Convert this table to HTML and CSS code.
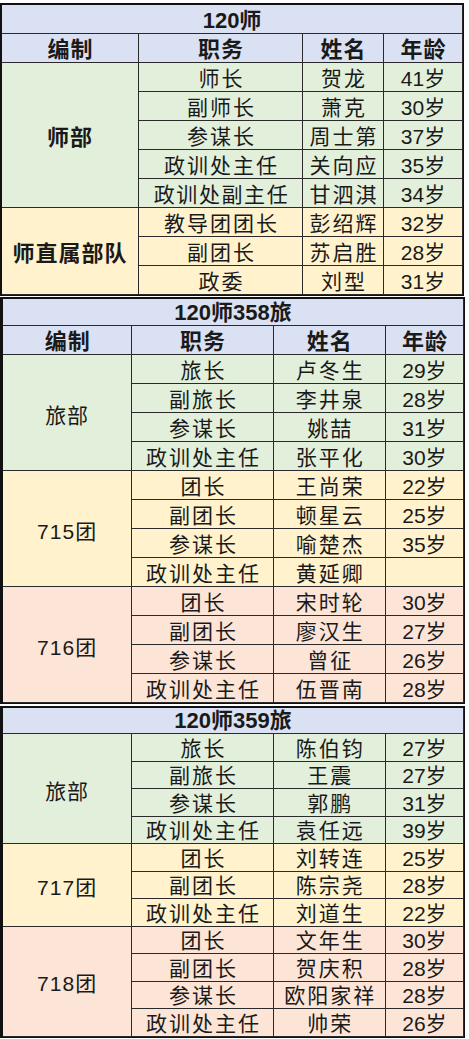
FILE: index.html
```html
<!DOCTYPE html>
<html lang="zh-CN">
<head>
<meta charset="utf-8">
<title>120师编制</title>
<link rel="stylesheet" href="styles.css">
</head>
<body>
<table class="sheet t1">
  <colgroup><col class="c1"><col class="c2"><col class="c3"><col class="c4"></colgroup>
  <tr class="title"><td colspan="4">120师</td></tr>
  <tr class="head"><td>编制</td><td>职务</td><td>姓名</td><td>年龄</td></tr>
  <tr class="green"><td class="grp bold" rowspan="5">师部</td><td class="cj">师长</td><td class="cj">贺龙</td><td>41岁</td></tr>
  <tr class="green"><td class="cj">副师长</td><td class="cj">萧克</td><td>30岁</td></tr>
  <tr class="green"><td class="cj">参谋长</td><td class="cj">周士第</td><td>37岁</td></tr>
  <tr class="green"><td class="cj">政训处主任</td><td class="cj">关向应</td><td>35岁</td></tr>
  <tr class="green"><td class="cj tight">政训处副主任</td><td class="cj">甘泗淇</td><td>34岁</td></tr>
  <tr class="yellow"><td class="grp bold" rowspan="3">师直属部队</td><td class="cj">教导团团长</td><td class="cj">彭绍辉</td><td>32岁</td></tr>
  <tr class="yellow"><td class="cj">副团长</td><td class="cj">苏启胜</td><td>28岁</td></tr>
  <tr class="yellow"><td class="cj">政委</td><td class="cj">刘型</td><td>31岁</td></tr>
</table>

<table class="sheet t2">
  <colgroup><col class="d1"><col class="d2"><col class="d3"><col class="d4"></colgroup>
  <tr class="title"><td colspan="4">120师358旅</td></tr>
  <tr class="head"><td>编制</td><td>职务</td><td>姓名</td><td>年龄</td></tr>
  <tr class="green"><td class="grp" rowspan="4">旅部</td><td class="cj">旅长</td><td class="cj">卢冬生</td><td>29岁</td></tr>
  <tr class="green"><td class="cj">副旅长</td><td class="cj">李井泉</td><td>28岁</td></tr>
  <tr class="green"><td class="cj">参谋长</td><td class="cj">姚喆</td><td>31岁</td></tr>
  <tr class="green"><td class="cj">政训处主任</td><td class="cj">张平化</td><td>30岁</td></tr>
  <tr class="yellow"><td class="grp" rowspan="4">715团</td><td class="cj">团长</td><td class="cj">王尚荣</td><td>22岁</td></tr>
  <tr class="yellow"><td class="cj">副团长</td><td class="cj">顿星云</td><td>25岁</td></tr>
  <tr class="yellow"><td class="cj">参谋长</td><td class="cj">喻楚杰</td><td>35岁</td></tr>
  <tr class="yellow"><td class="cj">政训处主任</td><td class="cj">黄延卿</td><td></td></tr>
  <tr class="pink"><td class="grp" rowspan="4">716团</td><td class="cj">团长</td><td class="cj">宋时轮</td><td>30岁</td></tr>
  <tr class="pink"><td class="cj">副团长</td><td class="cj">廖汉生</td><td>27岁</td></tr>
  <tr class="pink"><td class="cj">参谋长</td><td class="cj">曾征</td><td>26岁</td></tr>
  <tr class="pink"><td class="cj">政训处主任</td><td class="cj">伍晋南</td><td>28岁</td></tr>
</table>

<table class="sheet t3">
  <colgroup><col class="d1"><col class="d2"><col class="d3"><col class="d4"></colgroup>
  <tr class="title"><td colspan="4">120师359旅</td></tr>
  <tr class="green"><td class="grp" rowspan="4">旅部</td><td class="cj">旅长</td><td class="cj">陈伯钧</td><td>27岁</td></tr>
  <tr class="green"><td class="cj">副旅长</td><td class="cj">王震</td><td>27岁</td></tr>
  <tr class="green"><td class="cj">参谋长</td><td class="cj">郭鹏</td><td>31岁</td></tr>
  <tr class="green"><td class="cj">政训处主任</td><td class="cj">袁任远</td><td>39岁</td></tr>
  <tr class="yellow"><td class="grp" rowspan="3">717团</td><td class="cj">团长</td><td class="cj">刘转连</td><td>25岁</td></tr>
  <tr class="yellow"><td class="cj">副团长</td><td class="cj">陈宗尧</td><td>28岁</td></tr>
  <tr class="yellow"><td class="cj">政训处主任</td><td class="cj">刘道生</td><td>22岁</td></tr>
  <tr class="pink"><td class="grp" rowspan="4">718团</td><td class="cj">团长</td><td class="cj">文年生</td><td>30岁</td></tr>
  <tr class="pink"><td class="cj">副团长</td><td class="cj">贺庆积</td><td>28岁</td></tr>
  <tr class="pink"><td class="cj">参谋长</td><td class="cj">欧阳家祥</td><td>28岁</td></tr>
  <tr class="pink"><td class="cj">政训处主任</td><td class="cj">帅荣</td><td>26岁</td></tr>
</table>
</body>
</html>
```

FILE: styles.css
```css
html, body {
  margin: 0;
  padding: 0;
  background: #ffffff;
}

body {
  font-family: "Liberation Sans", "Noto Sans CJK SC", sans-serif;
  color: #1a1a1a;
}

.sheet {
  border-collapse: separate;
  border-spacing: 0;
  table-layout: fixed;
  border-top: 2px solid #111;
  border-left: 2px solid #111;
  border-right: 1px solid #111;
  border-bottom: 1px solid #111;
}

.sheet td {
  padding: 0;
  border-right: 1px solid #2a2a2a;
  border-bottom: 1px solid #2a2a2a;
  text-align: center;
  vertical-align: bottom;
  font-size: 21px;
  line-height: 24px;
  white-space: nowrap;
  overflow: hidden;
}

.t1 {
  width: 464px;
  margin-top: 3px;
}
.t1 .c1 { width: 137px; }
.t1 .c2 { width: 164px; }
.t1 .c3 { width: 81px; }
.t1 .c4 { width: 79px; }
.t1 tr { height: 29px; }

.t2, .t3 {
  width: 465px;
  border-left-width: 3px;
}
.t2 { margin-top: 1px; }
.t3 { margin-top: 2px; }
.d1 { width: 129px; }
.d2 { width: 141px; }
.d3 { width: 112px; }
.d4 { width: 78px; }

.t2 tr { height: 29px; }
.t2 tr.title { height: 27px; }
.t3 tr { height: 27.5px; }
.t3 tr.title { height: 26px; }

.title td {
  background: #d9e1f2;
  font-size: 22px;
  font-weight: bold;
}

.head td {
  background: #d9e1f2;
  font-size: 22px;
  font-weight: bold;
  letter-spacing: 1px;
  padding-left: 1px;
}

.green td { background: #e2efda; }
.yellow td { background: #fff2cc; }
.pink td { background: #fce4d6; }

.sheet td.cj {
  letter-spacing: 2px;
  padding-left: 2px;
}
.sheet td.tight {
  letter-spacing: 1.6px;
}

.sheet td.grp {
  vertical-align: middle;
  padding-top: 6px;
  letter-spacing: 1px;
}

.sheet td.bold {
  font-size: 22px;
  font-weight: bold;
}
```
